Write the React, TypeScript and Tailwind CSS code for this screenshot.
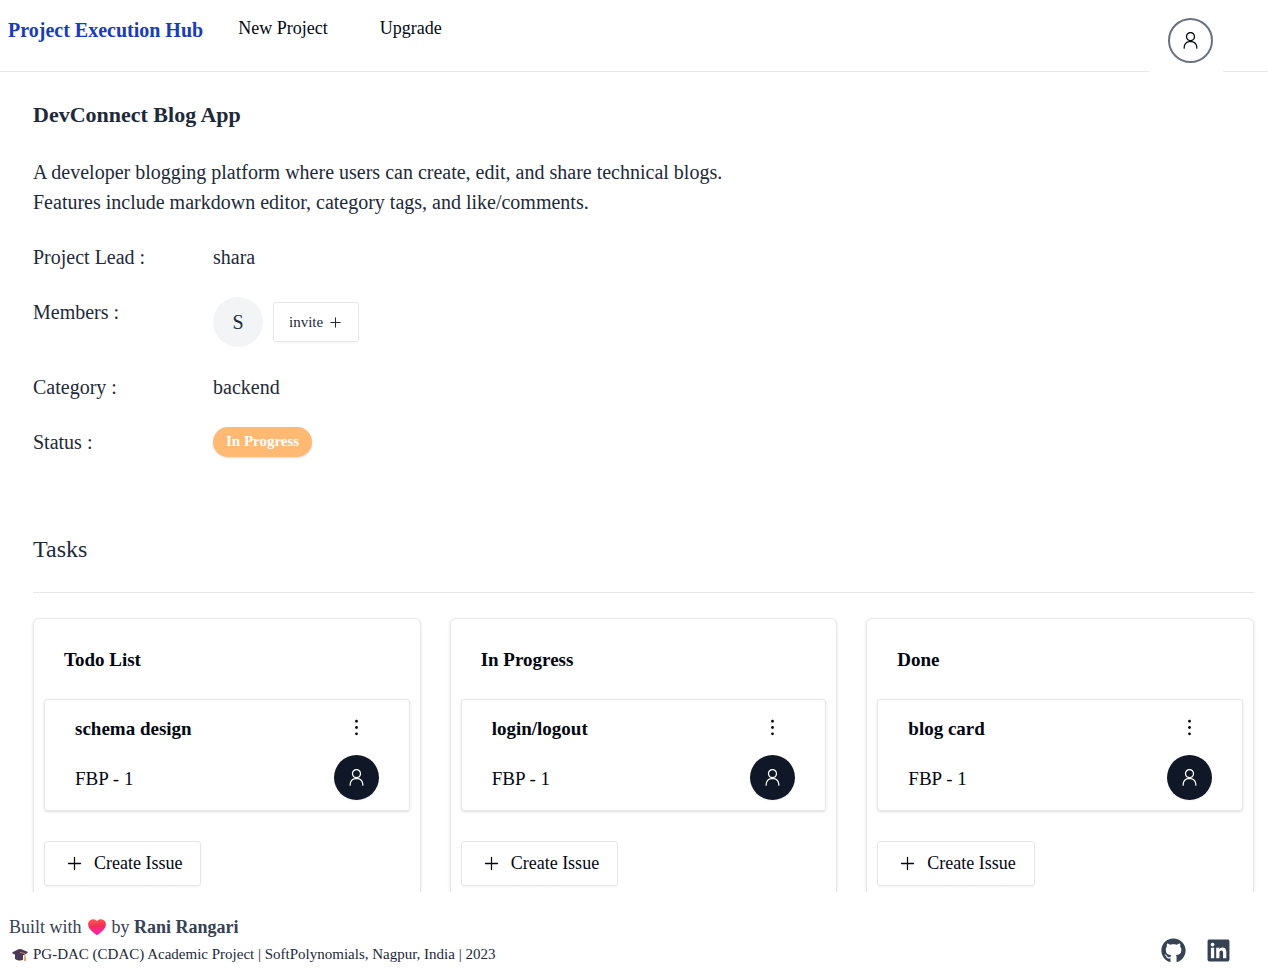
import { FaGithub, FaLinkedin } from "react-icons/fa";
import { RxDotsVertical, RxPerson, RxPlus } from "react-icons/rx";

const columns = [
  { title: "Todo List", issue: "schema design" },
  { title: "In Progress", issue: "login/logout" },
  { title: "Done", issue: "blog card" },
];

function Header() {
  return (
    <header className="flex h-18 shrink-0 items-start justify-between border-b border-gray-200 pl-2 pr-[45px]">
      <nav className="flex items-start pt-[15px]">
        <a href="#home" className="mr-[35px] text-[20px] leading-[30px] font-bold text-blue-800">
          Project Execution Hub
        </a>
        <button type="button" className="mr-[52px] text-[18px] leading-[26px]">
          New Project
        </button>
        <button type="button" className="text-[18px] leading-[26px]">
          Upgrade
        </button>
      </nav>
      <button type="button" aria-label="Account" className="bg-white pt-[18px] pr-[10px] pb-3 pl-[19px]">
        <span className="flex size-[45px] items-center justify-center rounded-full border-2 border-gray-500">
          <RxPerson className="size-[19px]" />
        </span>
      </button>
    </header>
  );
}

function Details() {
  return (
    <section className="text-gray-800">
      <h1 className="text-[22px] leading-[35px] font-bold">DevConnect Blog App</h1>
      <p className="mt-[25px] max-w-[700px] text-[20px] leading-[30px]">
        A developer blogging platform where users can create, edit, and share technical blogs.
        Features include markdown editor, category tags, and like/comments.
      </p>
      <dl className="mt-[25px] grid grid-cols-[180px_1fr] gap-y-[25px] text-[20px] leading-[30px]">
        <dt>Project Lead :</dt>
        <dd>shara</dd>
        <dt>Members :</dt>
        <dd className="flex items-center gap-[10px]">
          <span className="flex size-[50px] items-center justify-center rounded-full bg-gray-100">S</span>
          <button
            type="button"
            className="flex h-10 items-center gap-[5px] rounded-[3px] border border-gray-200 px-[15px] text-[15px] shadow-xs"
          >
            invite <RxPlus className="size-[15px]" />
          </button>
        </dd>
        <dt>Category :</dt>
        <dd>backend</dd>
        <dt>Status :</dt>
        <dd>
          <span className="flex h-[30px] w-fit items-center rounded-full bg-[#ffb972] px-[13px] pb-0.5 text-[15px] font-bold text-white shadow-sm">
            In Progress
          </span>
        </dd>
      </dl>
    </section>
  );
}

function IssueCard({ title }: { title: string }) {
  return (
    <article className="flex justify-between rounded-[3px] border border-gray-200 px-[30px] py-[10px] shadow-sm">
      <div className="flex flex-col gap-5 pt-1 text-[19px] leading-[30px]">
        <h3 className="font-bold">{title}</h3>
        <p>FBP - 1</p>
      </div>
      <div className="flex flex-col items-center gap-[10px]">
        <button type="button" aria-label="Issue options" className="flex h-[35px] items-center">
          <RxDotsVertical className="size-[19px]" />
        </button>
        <button
          type="button"
          aria-label="Assign issue"
          className="flex size-[45px] items-center justify-center rounded-full bg-gray-900 text-white shadow-xs"
        >
          <RxPerson className="size-[19px]" />
        </button>
      </div>
    </article>
  );
}

function Tasks() {
  return (
    <section className="mt-[75px]">
      <h2 className="border-b border-gray-200 pb-[25px] text-[24px] leading-[35px] text-gray-800">Tasks</h2>
      <div className="mt-[25px] grid grid-cols-3 gap-[29px]">
        {columns.map((column) => (
          <div key={column.title} className="rounded-md border border-gray-200 px-[10px] pb-10 shadow-sm">
            <h3 className="px-5 pt-[26px] pb-6 text-[19px] leading-[30px] font-bold">{column.title}</h3>
            <IssueCard title={column.issue} />
            <button
              type="button"
              className="mt-[30px] flex h-[45px] items-center gap-[10px] rounded-[3px] border border-gray-200 pr-[18px] pl-5 text-[18px] shadow-xs"
            >
              <RxPlus className="size-[19px]" />
              Create Issue
            </button>
          </div>
        ))}
      </div>
    </section>
  );
}

function Heart() {
  return (
    <svg viewBox="0 0 18 16" className="h-4 w-[18px]" aria-hidden="true">
      <defs>
        <linearGradient id="heart" x1="0.4" y1="0" x2="0.55" y2="1">
          <stop offset="0" stopColor="#fb5a55" />
          <stop offset="0.45" stopColor="#f02f55" />
          <stop offset="0.8" stopColor="#ff25a0" />
          <stop offset="1" stopColor="#ff22a4" />
        </linearGradient>
      </defs>
      <path
        fill="url(#heart)"
        d="M9 2.300C7.600.200 4.800-.200 2.600.900.100 2.300-.500 5.300.700 8 2 11 5.500 13.900 8.300 15.700Q9 16.100 9.700 15.700C12.500 13.900 16 11 17.300 8 18.500 5.300 17.900 2.300 15.400.900 13.200-.200 10.400.200 9 2.300Z"
      />
    </svg>
  );
}

function GraduationCap() {
  return (
    <svg viewBox="0 0 16 14" className="h-3.5 w-4" aria-hidden="true">
      <path fill="#493a5c" d="M3 5.500V10.500C4 12.600 9 13.300 11 11.800V6Z" />
      <path fill="#4b3a56" d="M.4 4.200 6.500 1.300Q8 .8 9.500 1.200L15.500 3.700V4.900L9.500 8.300Q8.300 8.900 7 8.300L.5 5.400Z" />
      <path fill="none" stroke="#c98a58" strokeWidth="0.900" d="M8 4.300 12.900 5.600V10" />
      <path fill="#f2a065" d="M12.100 8.800H13.700L14.200 13H11.800Z" />
    </svg>
  );
}

function Footer() {
  return (
    <footer className="flex shrink-0 items-center justify-between bg-white pt-[21px] pr-[37px] pb-2 pl-[9px]">
      <div>
        <p className="flex items-center text-[18px] leading-[28px] text-gray-700">
          Built with
          <span className="mx-[6px]">
            <Heart />
          </span>
          by&nbsp;<strong>Rani Rangari</strong>
        </p>
        <p className="flex items-center gap-[5px] pl-[3px] text-[15px] leading-[27px] text-gray-800">
          <GraduationCap />
          PG-DAC (CDAC) Academic Project | SoftPolynomials, Nagpur, India | 2023
        </p>
      </div>
      <div className="flex items-center gap-5 pt-5 text-gray-700">
        <a href="#github" aria-label="GitHub">
          <FaGithub className="size-[25px]" />
        </a>
        <a href="#linkedin" aria-label="LinkedIn">
          <FaLinkedin className="size-[25px]" />
        </a>
      </div>
    </footer>
  );
}

export default function App() {
  return (
    <div className="flex h-screen flex-col overflow-hidden bg-white font-['Liberation_Serif',serif] text-gray-950">
      <Header />
      <main className="min-h-0 flex-1 overflow-hidden pt-[25px] pr-[14px] pl-[33px]">
        <Details />
        <Tasks />
      </main>
      <Footer />
    </div>
  );
}
